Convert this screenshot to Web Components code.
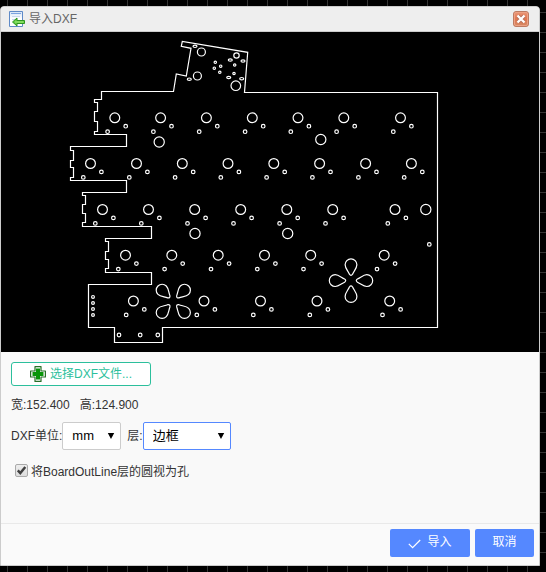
<!DOCTYPE html>
<html lang="zh-CN">
<head>
<meta charset="utf-8">
<title>导入DXF</title>
<style>
  body {
    margin: 0;
    color: #333;
    font: 12px/18px "Liberation Sans", "Noto Sans CJK SC", sans-serif;
    background-color: #000;
    background-image:
      linear-gradient(to right, #333 1px, transparent 1px),
      linear-gradient(to bottom, #333 1px, transparent 1px);
    background-size: 20px 20px;
    background-position: 7px 12px;
  }
</style>
</head>
<body>
<dxf-dialog>
  <span slot="title">导入DXF</span>
  <board-preview></board-preview>
  <import-form slot="form"></import-form>
  <action-button slot="actions" wide>
    <svg slot="icon" width="13" height="10" viewBox="0 0 13 10" fill="none" stroke="#fff" stroke-width="1.2"><path d="M.8 4.8 4.6 8.6 12.2 1"/></svg>
    导入</action-button>
  <action-button slot="actions">取消</action-button>
</dxf-dialog>

<script>
function define(name, markup, setup) {
  const template = document.createElement('template');
  template.innerHTML = markup;
  customElements.define(name, class extends HTMLElement {
    constructor() {
      super();
      this.attachShadow({ mode: 'open' }).append(template.content.cloneNode(true));
    }
    connectedCallback() {
      if (setup && !this.ready) { this.ready = true; setup(this, this.shadowRoot); }
    }
  });
}

define('dxf-dialog', `
<style>
  :host { display: flex; box-sizing: border-box; min-height: 100vh; padding: 6px 6px 6px 0; }
  section { flex: 1; min-width: 0; display: flex; flex-direction: column; box-sizing: border-box;
    border: 1px solid #ccc; border-radius: 4px 4px 0 0; background: #f9f9f9; overflow: hidden; }
  header { display: flex; align-items: center; gap: 4px; box-sizing: border-box; height: 25px;
    padding: 0 10px 0 8px; border-bottom: 1px solid #ccc; background: #eee; }
  h1 { flex: 1; margin: 0; font: inherit; color: #666; }
  header svg { display: block; }
  .close { padding: 0; border: 0; background: none; }
  main { flex: 1; }
  footer { display: flex; justify-content: flex-end; gap: 5px; padding: 5px 5px 8px;
    border-top: 1px solid #e9e9e9; background: #fafafa; }
</style>
<section role="dialog" aria-label="导入DXF">
  <header>
    <svg width="16" height="16" viewBox="0 0 16 16">
      <defs><linearGradient id="sheet" x2="0" y2="1"><stop stop-color="#d5e4f7"/><stop offset=".5" stop-color="#fff"/></linearGradient></defs>
      <path d="M.5.5h13v15H.5z" fill="url(#sheet)" stroke="#5f8ac7"/>
      <path d="M2 2.5h10" stroke="#7ba4e0"/>
      <path d="M3 5.5h8M3 8.5h3" stroke="#c9d9ee"/>
      <path d="M3.5 11 8 7v2.5h7.5v3H8V15z" fill="#63cc42" stroke="#2e9622" stroke-linejoin="round"/>
      <path d="M6 11h8.5" stroke="#a5ed7c"/>
    </svg>
    <h1><slot name="title"></slot></h1>
    <button class="close" type="button" aria-label="关闭">
      <svg width="16" height="16" viewBox="0 0 16 16">
        <defs><linearGradient id="red" x2="0" y2="1"><stop stop-color="#e9997b"/><stop offset=".5" stop-color="#e2764f"/><stop offset="1" stop-color="#d38b67"/></linearGradient></defs>
        <rect x=".5" y=".5" width="15" height="15" rx="2.5" fill="url(#red)" stroke="#bd7b62"/>
        <rect x="1.5" y="1.5" width="13" height="13" rx="1.5" fill="none" stroke="#eda184"/>
        <path d="m4.8 4.8 6.4 6.4m0-6.4-6.4 6.4" stroke="#b6705a" stroke-width="4"/>
        <path d="m4.5 4.5 7 7m0-7-7 7" stroke="#fff" stroke-width="2.3"/>
      </svg>
    </button>
  </header>
  <slot></slot>
  <main><slot name="form"></slot></main>
  <footer><slot name="actions"></slot></footer>
</section>`);

define('board-preview', `
<style>
  :host { display: block; background: #000; }
  svg { display: block; width: 100%; height: auto; }
</style>
<svg viewBox="1 32 538 320" fill="none" stroke="#fff" stroke-width="1.2" role="img" aria-label="DXF">
  <defs><path id="petal" d="M-1.6-6.4C-3-9.6-5.9-12.5-5.9-15.8A5.9 5.9 0 0 1 5.9-15.8C5.9-12.5 3-9.6 1.6-6.4Q0-4.2-1.6-6.4Z"/></defs>
  <path d="M244.5 92.5H437.5V327.5H162.5V342.5H114.5V327.5H88.5V284.5H151.5V272.5H105.5V268.5H108.5V259.5H105.5V251.5H108.5V241.5H105.5V238.5H151.5V226.5H82.5V222.5H85.5V213.5H82.5V204.5H85.5V195.5H82.5V192.5H126.5V180.5H70.5V177.5H73.5V167.5H70.5V160.5H73.5V150.5H70.5V146.5H126.5V134.5H94.5V131.5H97.5V121.5H94.5V111.5H97.5V102.5H94.5V99.5H101.5V91.5H173.5L176.3 74 186.3 76 191 48.3 181.3 46.3 182.3 41.5 247.7 52.3Z"/>
  <g id="holes"></g>
  <g transform="translate(351 280.6)"><use href="#petal"/><use href="#petal" transform="rotate(90)"/><use href="#petal" transform="rotate(180)"/><use href="#petal" transform="rotate(270)"/></g>
  <g transform="translate(173.3 301.3) rotate(45)"><use href="#petal"/><use href="#petal" transform="rotate(90)"/><use href="#petal" transform="rotate(180)"/><use href="#petal" transform="rotate(270)"/></g>
</svg>`, (host, root) => {
  const holes = root.getElementById('holes');
  const hole = (cx, cy, rx, ry = rx) => {
    const e = document.createElementNS('http://www.w3.org/2000/svg', 'ellipse');
    for (const [k, v] of Object.entries({ cx, cy, rx, ry })) e.setAttribute(k, v);
    holes.append(e);
  };
  // Each key switch has one large stem hole and two small pin holes.
  const rows = [
    [117.8, [114.8, 160.6, 206.4, 252.3, 298, 343.8, 400.5]],
    [163.5, [90.5, 136.5, 182.3, 228, 273.8, 319.6, 365.6, 411.4]],
    [209.5, [102.5, 148.5, 194.7, 240.7, 286.8, 332.7, 395]],
    [255.2, [125.5, 171.8, 218.2, 264.5, 310.7, 384.2]],
    [301, [133.4, 204, 260.5, 317, 389.7]]
  ];
  for (const [y, xs] of rows) for (const x of xs) {
    hole(x, y, 4.9);
    hole(x + 10.9, y + 8.4, 1.8);
    hole(x - 7.2, y + 13.9, 1.8);
  }
  [[159.2, 142], [320.8, 139.5], [195, 233.5], [287.7, 233.5], [425.8, 209.5]].forEach(p => hole(...p, 5.1));
  [[119, 335], [140.2, 335], [157.8, 335], [429.3, 244.4]].forEach(p => hole(...p, 1.8));
  [296.9, 303, 309.1, 315].forEach(y => hole(93, y, 1.4));
  hole(201.4, 52, 4); hole(197.4, 76, 4); hole(236.5, 55.5, 2.7); hole(235.8, 85.7, 4.8);
  [[215.3, 62.3], [220.7, 66.2], [214.3, 68.2], [219.8, 72.3], [234.7, 65], [234, 73.5]].forEach(p => hole(...p, 1.2));
  [[195, 46.3], [189.3, 79.2], [230.3, 60], [243, 61], [228.7, 77.5], [241.7, 78.7]].forEach(p => hole(...p, 2, 1.2));
});

define('import-form', `
<style>
  :host { display: flex; flex-direction: column; align-items: flex-start; padding: 10px; }
  .file { display: flex; align-items: center; justify-content: center; gap: 4px; box-sizing: border-box;
    width: 140px; height: 24px; padding: 0; border: 1px solid #2cbf9c; border-radius: 3px;
    background: #fff; color: #2cbf9c; font: inherit; }
  .size { display: flex; gap: 10px; margin: 10px 0 8px; }
  .fields { display: flex; gap: 6px; margin-bottom: 13px; }
</style>
<button class="file" type="button">
  <svg width="16" height="16" viewBox="0 0 16 16">
    <path d="M5 .6h6V5h4.4v6H11v4.4H5V11H.6V5H5z" fill="#fff" stroke="#286f28" stroke-width="1.2" stroke-linejoin="round"/>
    <path d="M6 2.5h4V6h3.5v4H10v3.5H6V10H2.5V6H6z" fill="#0a950a"/>
  </svg>
  <span>选择DXF文件...</span>
</button>
<div class="size"><span>宽:152.400</span><span>高:124.900</span></div>
<div class="fields">
  <select-field label="DXF单位:" value="mm"></select-field>
  <select-field label="层:" value="边框" wide active></select-field>
</div>
<check-field>将BoardOutLine层的圆视为孔</check-field>`);

define('select-field', `
<style>
  :host { display: flex; align-items: center; }
  .box { display: grid; align-items: center; width: 59px; }
  :host([wide]) .box { width: 88px; }
  select, svg { grid-area: 1 / 1; }
  select { appearance: none; box-sizing: border-box; width: 100%; height: 28px; margin: 0; padding: 0 9px;
    border: 1px solid #ccc; border-radius: 2px; outline: 0; background: #fff; color: #000;
    font: 13px/18px "Liberation Sans", "Noto Sans CJK SC", sans-serif; }
  :host([active]) select { border-color: #58f; }
  svg { justify-self: end; margin-right: 6px; pointer-events: none; }
</style>
<label for="choice"></label>
<span class="box">
  <select id="choice"><option></option></select>
  <svg width="8" height="6" viewBox="0 0 8 6"><path d="M.8 0h6.4L4 6z"/></svg>
</span>`, (host, root) => {
  root.querySelector('label').textContent = host.getAttribute('label');
  root.querySelector('option').textContent = host.getAttribute('value');
});

define('check-field', `
<style>
  :host { display: block; padding-left: 4px; }
  label { display: flex; align-items: center; gap: 3px; }
  .box { display: grid; margin-bottom: 4px; }
  input, svg { grid-area: 1 / 1; }
  input { appearance: none; box-sizing: border-box; width: 13px; height: 13px; margin: 0;
    border: 1px solid #aaa; border-radius: 2px; background: linear-gradient(#eee, #ddd); }
  svg { pointer-events: none; visibility: hidden; }
  input:checked + svg { visibility: visible; }
</style>
<label>
  <span class="box">
    <input type="checkbox" checked>
    <svg width="13" height="13" viewBox="0 0 13 13" fill="none" stroke="#404040" stroke-width="2.4"><path d="m2.8 6.4 2.5 2.7 5-6.2"/></svg>
  </span>
  <span><slot></slot></span>
</label>`);

define('action-button', `
<style>
  :host { display: block; }
  button { display: flex; align-items: center; justify-content: center; gap: 6px; box-sizing: border-box;
    width: 59px; height: 28px; padding: 0 0 2px; border: 0; border-radius: 2px;
    background: #58f; color: #fff; font: inherit; }
  :host([wide]) button { width: 80px; }
  ::slotted(svg) { display: block; margin-top: 3px; }
</style>
<button type="button"><slot name="icon"></slot><span><slot></slot></span></button>`);
</script>
</body>
</html>
